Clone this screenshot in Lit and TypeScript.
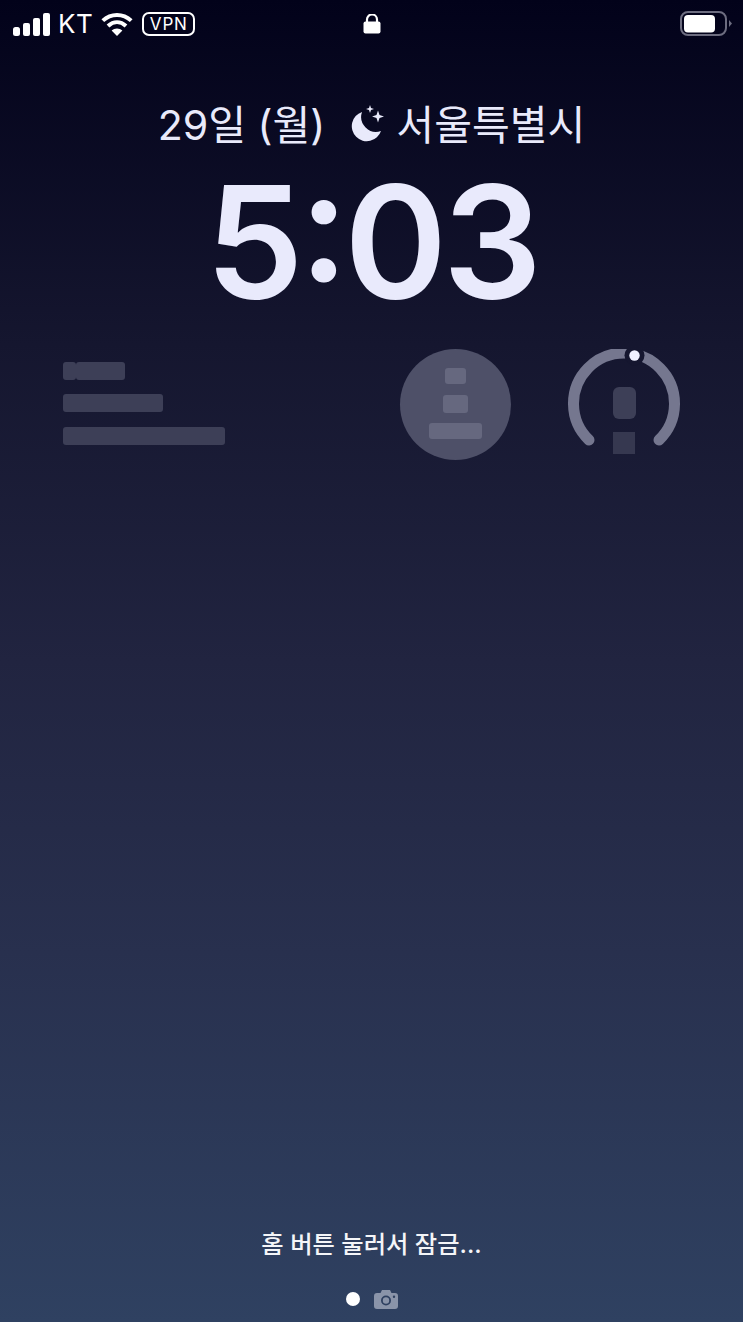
import { LitElement, html, css } from "lit";
import { customElement } from "lit/decorators.js";

@customElement("app-root")
export class AppRoot extends LitElement {
  static styles = css`
    :host {
      display: flex;
      flex-direction: column;
      width: 743px;
      height: 1322px;
      overflow: hidden;
      background: linear-gradient(180deg, #02021a 0%, #15162f 26%, #212440 50%, #28304e 72%, #2f4161 100%);
      color: #fff;
      font-family: Inter, "Noto Sans CJK KR", sans-serif;
    }
    .status {
      display: grid;
      grid-template-columns: 1fr auto 1fr;
      align-items: center;
      height: 48px;
      padding: 0 11px 0 13px;
    }
    .left { display: flex; align-items: center; gap: 8px; }
    .kt { font-size: 26px; line-height: 30px; font-weight: 400; letter-spacing: 0.5px; }
    .vpn {
      box-sizing: border-box;
      height: 24px;
      width: 53px;
      margin-left: 1px;
      border: 2px solid #fff;
      border-radius: 7px;
      font-size: 17px;
      line-height: 20px;
      font-weight: 400;
      text-align: center;
      letter-spacing: 0.8px;
    }
    .right { display: flex; justify-content: flex-end; }
    .lock { margin-right: 2px; }
    svg { display: block; flex: none; }
    .date {
      display: flex;
      justify-content: center;
      align-items: center;
      margin-top: 50px;
      height: 54px;
      font-size: 41.1px;
      line-height: 54px;
      color: #e9eafb;
    }
    .date span { white-space: nowrap; }
    .moon { margin: 0 9px 0 26px; }
    .clock {
      margin-top: 7px;
      height: 165px;
      text-align: center;
      font-size: 156px;
      line-height: 165px;
      font-weight: 600;
      letter-spacing: -4.500px;
      font-feature-settings: "case" 1;
      color: #e9eafc;
    }
    .widgets {
      display: flex;
      align-items: flex-start;
      margin-top: 25px;
      padding-left: 63px;
    }
    .lines { display: flex; flex-direction: column; width: 337px; padding-top: 13px; }
    .line-row { display: flex; }
    .bar { height: 18px; background: #3d3f57; border-radius: 3px; }
    .b0 { width: 13px; }
    .b1 { width: 49px; }
    .b2 { width: 100px; margin-top: 14px; }
    .b3 { width: 162px; margin-top: 15px; }
    .disc {
      box-sizing: border-box;
      width: 111px;
      height: 111px;
      border-radius: 50%;
      background: #4e5068;
      display: flex;
      flex-direction: column;
      align-items: center;
      padding-top: 19px;
    }
    .disc div { background: #66687f; border-radius: 3px; }
    .d1 { width: 21px; height: 16px; }
    .d2 { width: 25px; height: 18px; margin-top: 11px; }
    .d3 { width: 53px; height: 16px; margin-top: 10px; }
    .ring { margin-left: 57px; }
    .spacer { flex: 1; }
    .hint {
      text-align: center;
      font-size: 24.3px;
      line-height: 32px;
      font-weight: 500;
      color: #f4f5f8;
    }
    .pager {
      display: flex;
      justify-content: center;
      align-items: center;
      gap: 14px;
      height: 24px;
      margin: 27px 0 11px;
    }
    .dot { width: 14px; height: 14px; border-radius: 50%; background: #fff; }
  `;

  render() {
    return html`
      <div class="status">
        <div class="left">
          <svg width="37" height="23" viewBox="0 0 37 23" fill="#fff">
            <rect x="0" y="14" width="7" height="9" rx="2.5"></rect>
            <rect x="10" y="10" width="7" height="13" rx="2"></rect>
            <rect x="20" y="5" width="7" height="18" rx="2"></rect>
            <rect x="30" y="0" width="7" height="23" rx="2"></rect>
          </svg>
          <span class="kt">KT</span>
          <svg width="32" height="24" viewBox="0 0 32 24" fill="none" stroke="#fff" stroke-width="4">
            <path d="M1.8 8.6C10 1 22 1 30.2 8.6"></path>
            <path d="M7 14C12.5 9 19.5 9 25 14"></path>
            <path d="M16 24L10.6 18.6C13.6 15.8 18.4 15.8 21.4 18.6Z" fill="#fff" stroke="none"></path>
          </svg>
          <div class="vpn">VPN</div>
        </div>
        <svg class="lock" width="18" height="20" viewBox="0 0 18 20" fill="#fff">
          <rect x="0.5" y="7.5" width="17" height="12" rx="2"></rect>
          <path d="M4 8V5.5a5 5 0 0 1 10 0V8" fill="none" stroke="#fff" stroke-width="2.2"></path>
        </svg>
        <div class="right">
          <svg width="52" height="26" viewBox="0 0 52 26">
            <rect x="1" y="1" width="45" height="23" rx="7" fill="none" stroke="#6d6d80" stroke-width="2"></rect>
            <rect x="4" y="4" width="31" height="17.5" rx="4" fill="#fff"></rect>
            <path d="M49 9l3 3.5-3 3.5z" fill="#6d6d80"></path>
          </svg>
        </div>
      </div>

      <div class="date">
        <span>29일 (월)</span>
        <svg class="moon" width="36" height="40" viewBox="0 0 36 40" fill="#e9eafb">
          <path d="M11 7A15 15 0 1 0 30 26A15 15 0 0 1 11 7Z"></path>
          <path d="M19 0l1 3 3 1-3 1-1 3-1-3-3-1 3-1z"></path>
          <path d="M27 5.500l1.500 4.500 4.500 1.500-4.500 1.500-1.500 4.500-1.500-4.500-4.500-1.500 4.500-1.500z"></path>
        </svg>
        <span>서울특별시</span>
      </div>

      <div class="clock">5:03</div>

      <div class="widgets">
        <div class="lines">
          <div class="line-row"><div class="bar b0"></div><div class="bar b1"></div></div>
          <div class="bar b2"></div>
          <div class="bar b3"></div>
        </div>
        <div class="disc">
          <div class="d1"></div>
          <div class="d2"></div>
          <div class="d3"></div>
        </div>
        <svg class="ring" width="112" height="112" viewBox="0 0 112 112" fill="none">
          <path d="M21 91A50.5 50.5 0 1 1 91 91" stroke="#75778f" stroke-width="11" stroke-linecap="round"></path>
          <circle cx="66.500" cy="6.500" r="10" fill="#15162f"></circle>
          <circle cx="66.500" cy="6.500" r="5.200" fill="#eff0ff"></circle>
          <rect x="45" y="38" width="23" height="32" rx="6" fill="#3d3f57"></rect>
          <rect x="45" y="83" width="22" height="22" fill="#363850"></rect>
        </svg>
      </div>

      <div class="spacer"></div>

      <div class="hint">홈 버튼 눌러서 잠금...</div>
      <div class="pager">
        <div class="dot"></div>
        <svg width="24" height="19" viewBox="0 0 24 19">
          <path fill="#8a94a9" fill-rule="evenodd" d="M3 3h3.500l1.500-3h8l1.500 3H21a3 3 0 0 1 3 3v10a3 3 0 0 1-3 3H3a3 3 0 0 1-3-3V6a3 3 0 0 1 3-3ZM12 5.500a5 5 0 1 0 0 10 5 5 0 0 0 0-10ZM12 7.300a3.200 3.200 0 1 1 0 6.400 3.200 3.200 0 0 1 0-6.400ZM20 5.500a1.200 1.200 0 1 0 0 2.400 1.200 1.200 0 0 0 0-2.400Z"></path>
        </svg>
      </div>
    `;
  }
}
